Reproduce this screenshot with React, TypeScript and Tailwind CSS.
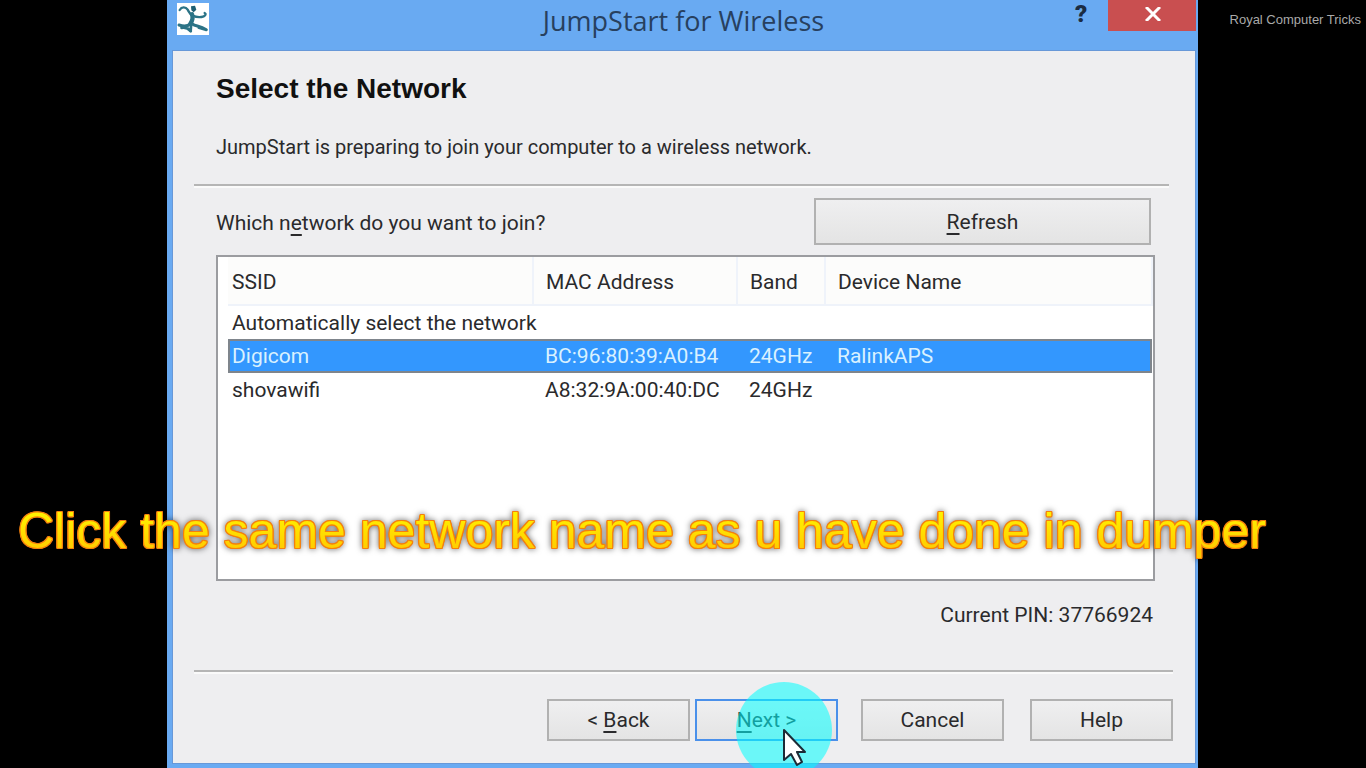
import { useState } from "react";

const NETWORKS = [
  { ssid: "Automatically select the network", mac: "", band: "", device: "" },
  { ssid: "Digicom", mac: "BC:96:80:39:A0:B4", band: "24GHz", device: "RalinkAPS" },
  { ssid: "shovawifi", mac: "A8:32:9A:00:40:DC", band: "24GHz", device: "" },
];

const BUTTON =
  "border-2 border-[#b1b1b1] bg-linear-to-b from-[#efeff0] to-[#e4e4e4] text-center";

function RunnerIcon() {
  return (
    <svg viewBox="0 0 96 96" className="h-8 w-8 bg-white" aria-hidden="true">
      <g fill="none" stroke="#2b7386" strokeLinecap="round" strokeLinejoin="round">
        <path d="M8 21C14 11 26 11 32 20C36 27 38 33 46 37" strokeWidth="7" />
        <path d="M46 38C56 42 70 44 80 40C86 37 88 32 83 30" strokeWidth="7" />
        <path d="M45 34C49 44 47 52 40 62" strokeWidth="13" />
        <path d="M40 63C32 70 18 70 6 66M14 74C24 72 34 76 41 84" strokeWidth="9" />
        <path d="M43 58L41 84" strokeWidth="8" />
        <path d="M46 63C56 70 68 68 88 80M66 74L86 80" strokeWidth="9" />
      </g>
      <path d="M42 10L54 8L58 20L50 28L43 22Z" fill="#1d5e72" />
    </svg>
  );
}

function TitleBar() {
  return (
    <header className="flex h-[51px] items-start">
      <div className="flex w-[146px] pt-[3px] pl-[10px]">
        <RunnerIcon />
      </div>
      <h1
        className="flex-1 pt-[2px] text-center text-[27px] leading-[38px] text-[#27405f]"
        style={{ fontFamily: '"Open Sans", "Noto Sans", sans-serif' }}
      >
        JumpStart for Wireless
      </h1>
      <button
        type="button"
        aria-label="Help topics"
        className="w-[54px] text-2xl leading-7 font-black text-[#1b2c42]"
      >
        ?
      </button>
      <button
        type="button"
        aria-label="Close"
        className="flex h-[31px] w-[88px] items-center justify-center bg-[#c94f50] pb-1 pl-[2px]"
      >
        <svg viewBox="0 0 16 14" className="h-[14px] w-4" aria-hidden="true">
          <path d="M1 0L15 14M15 0L1 14" stroke="#fff" strokeWidth="3" />
        </svg>
      </button>
    </header>
  );
}

function Divider() {
  return <hr className="border-t-2 border-b-2 border-t-[#b5b5b5] border-b-[#fafafa]" />;
}

function NetworkTable() {
  const [selected, setSelected] = useState("Digicom");

  return (
    <div className="h-[326px] border-2 border-[#9b9ca0] bg-white pl-[10px]">
      <table className="w-full table-fixed text-left">
        <colgroup>
          <col className="w-[305px]" />
          <col className="w-[204px]" />
          <col className="w-[88px]" />
          <col />
        </colgroup>
        <thead>
          <tr className="h-12 border-b-2 border-[#eff3fa] bg-[#fcfcfb]">
            <th className="border-r-2 border-[#eff3fa] pt-[2px] pl-1 font-normal">SSID</th>
            <th className="border-r-2 border-[#eff3fa] pt-[2px] pl-3 font-normal">MAC Address</th>
            <th className="border-r-2 border-[#eff3fa] pt-[2px] pl-3 font-normal">Band</th>
            <th className="border-r-2 border-[#eff3fa] pt-[2px] pl-3 font-normal">Device Name</th>
          </tr>
        </thead>
        <tbody>
          {NETWORKS.map(({ ssid, mac, band, device }) => (
            <tr
              key={ssid}
              onClick={() => setSelected(ssid)}
              className={`h-[34px] ${
                ssid === selected
                  ? "bg-[#3397fe] text-[#d9f1ff] outline-2 -outline-offset-2 outline-[#7f858c]"
                  : ""
              }`}
            >
              <td className="pl-1 whitespace-nowrap">{ssid}</td>
              <td className="pl-3 whitespace-nowrap">{mac}</td>
              <td className="pl-3 whitespace-nowrap">{band}</td>
              <td className="pl-3 whitespace-nowrap">{device}</td>
            </tr>
          ))}
        </tbody>
      </table>
    </div>
  );
}

function Footer() {
  return (
    <footer className="flex justify-end pt-[25px] pr-[22px] pb-[22px]">
      <button type="button" className={`h-[42px] w-[143px] ${BUTTON}`}>
        &lt; <u className="underline-offset-4">B</u>ack
      </button>
      <div className="relative ml-[5px]">
        <button
          type="button"
          className="h-[42px] w-[143px] border-2 border-[#4a90ea] bg-linear-to-b from-[#efeff0] to-[#e4e4e4] text-center"
        >
          <u className="underline-offset-4">N</u>ext &gt;
        </button>
        <div className="pointer-events-none absolute -top-[17px] left-[41px] h-24 w-24 rounded-full bg-[#00ffff]/55" />
        <svg
          viewBox="0 0 24 38"
          className="pointer-events-none absolute top-[29px] left-[87px] h-[38px] w-6"
          aria-hidden="true"
        >
          <path
            d="M2 2V32L9 26L15 37L20 34L15 24H23Z"
            fill="#fff"
            stroke="#1c2b36"
            strokeWidth="2"
            strokeLinejoin="round"
          />
        </svg>
      </div>
      <button type="button" className={`ml-[23px] h-[42px] w-[143px] ${BUTTON}`}>
        Cancel
      </button>
      <button type="button" className={`ml-[26px] h-[42px] w-[143px] ${BUTTON}`}>
        Help
      </button>
    </footer>
  );
}

export default function App() {
  return (
    <div className="relative flex h-screen min-h-[768px] overflow-hidden bg-black pl-[167px]">
      <main
        className="flex flex-1 flex-col bg-[#69aaf2] pr-[3px] pb-[5px] pl-[6px] text-[21px] leading-[30px] text-[#2a2a2c]"
        style={{ fontFamily: 'Roboto, "Liberation Sans", sans-serif' }}
      >
        <div className="-mr-[1px] -ml-[6px]">
          <TitleBar />
        </div>
        <div className="flex flex-1 flex-col bg-[#eeeef0] pl-[21px] ring-1 ring-[#6798d8]">
          <div className="pt-[22px] pl-[22px]">
            <h2
              className="text-[28px] leading-8 font-bold text-[#111]"
              style={{ fontFamily: '"Liberation Sans", Arial, sans-serif' }}
            >
              Select the Network
            </h2>
            <p className="mt-[27px] mb-[22px] text-xl leading-[30px]">
              JumpStart is preparing to join your computer to a wireless network.
            </p>
          </div>
          <div className="pr-[26px]">
            <Divider />
          </div>
          <div className="flex-1 pt-[10px] pr-10 pl-[22px]">
            <div className="mb-[10px] flex items-center justify-between pr-1">
              <span className="pt-[2px]">
                Which n<u className="underline-offset-4">e</u>twork do you want to join?
              </span>
              <button type="button" className={`h-[47px] w-[337px] ${BUTTON}`}>
                <u className="underline-offset-4">R</u>efresh
              </button>
            </div>
            <NetworkTable />
            <p className="mt-[19px] pr-[2px] text-right">Current PIN: 37766924</p>
          </div>
          <div className="pr-[22px]">
            <Divider />
          </div>
          <Footer />
        </div>
      </main>
      <aside
        className="w-[168px] pt-[10px] pr-[5px] text-right text-[13px] leading-5 text-[#a9a9a9]"
        style={{ fontFamily: '"Liberation Sans", Arial, sans-serif' }}
      >
        Royal Computer Tricks
      </aside>
      <p
        className="pointer-events-none absolute top-[501px] left-[18px] bg-linear-to-b from-[#fff200] from-20% to-[#ffcc00] to-80% bg-clip-text text-[50px] leading-[60px] whitespace-nowrap text-transparent [filter:drop-shadow(1px_0_0_#f5800c)_drop-shadow(-1px_0_0_#f5800c)_drop-shadow(0_1px_0_#f5800c)_drop-shadow(0_-1px_0_#f5800c)_drop-shadow(0_0_3px_rgba(0,0,0,0.6))]"
        style={{ fontFamily: '"Liberation Sans", Arial, sans-serif' }}
      >
        Click the same network name as u have done in dumper
      </p>
    </div>
  );
}
